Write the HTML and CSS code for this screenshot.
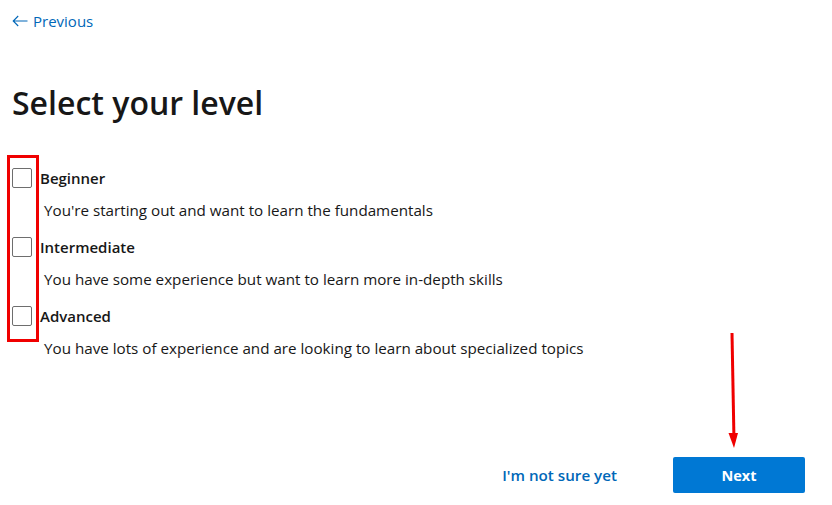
FILE: index.html
```html
<!DOCTYPE html>
<html lang="en">
<head>
<meta charset="utf-8">
<title>Select your level</title>
<link rel="stylesheet" href="styles.css">
</head>
<body>
<div class="page">
  <a class="back" href="#">
    <svg class="back-icon" width="16" height="12" viewBox="0 0 16 12" aria-hidden="true"><path d="M15.5 6H1.2M6.2 1L1.2 6l5 5" fill="none" stroke="currentColor" stroke-width="1.1"/></svg>
    <span>Previous</span>
  </a>
  <h1 class="title">Select your level</h1>
  <div class="options">
    <div class="option">
      <label class="option-row"><span class="box"></span><span class="option-label">Beginner</span></label>
      <p class="option-desc">You're starting out and want to learn the fundamentals</p>
    </div>
    <div class="option">
      <label class="option-row"><span class="box"></span><span class="option-label">Intermediate</span></label>
      <p class="option-desc">You have some experience but want to learn more in-depth skills</p>
    </div>
    <div class="option">
      <label class="option-row"><span class="box"></span><span class="option-label">Advanced</span></label>
      <p class="option-desc">You have lots of experience and are looking to learn about specialized topics</p>
    </div>
  </div>
  <div class="footer">
    <a class="link-btn" href="#">I'm not sure yet</a>
    <button class="primary-btn">Next</button>
  </div>
</div>
<div class="annot-box"></div>
<svg class="annot-arrow" width="20" height="125" viewBox="0 0 20 125" aria-hidden="true">
  <path d="M9 2 L11 110" stroke="#f00000" stroke-width="3" fill="none"/>
  <polygon points="5.5,102 15,102 11,117" fill="#f00000"/>
</svg>
</body>
</html>
```

FILE: styles.css
```css
html, body {
  margin: 0;
  padding: 0;
  background: #ffffff;
}
body {
  font-family: "Open Sans", "Noto Sans", sans-serif;
  color: #171717;
  position: relative;
  width: 832px;
  height: 505px;
  overflow: hidden;
}
.page {
  padding: 11px 27px 0 12px;
  display: flex;
  flex-direction: column;
}
.back {
  display: flex;
  align-items: center;
  gap: 5px;
  height: 20px;
  color: #0067b8;
  text-decoration: none;
  font-size: 15px;
  align-self: flex-start;
}
.back-icon {
  display: block;
}
.title {
  margin: 52px 0 0;
  font-size: 32px;
  line-height: 40px;
  font-weight: 600;
  color: #171717;
}
.options {
  margin-top: 45px;
  display: flex;
  flex-direction: column;
  gap: 16px;
}
.option-row {
  display: flex;
  align-items: center;
  height: 20px;
}
.box {
  width: 18px;
  height: 18px;
  border: 1px solid #6e6e6e;
  border-radius: 2px;
  box-sizing: content-box;
  flex: none;
}
.option-label {
  margin-left: 8px;
  font-size: 15px;
  font-weight: 600;
  color: #171717;
}
.option-desc {
  margin: 11px 0 0 32px;
  font-size: 15.2px;
  line-height: 22px;
  color: #171717;
}
.footer {
  margin-top: 97px;
  display: flex;
  justify-content: flex-end;
  align-items: center;
}
.link-btn {
  color: #0067b8;
  font-size: 15.2px;
  font-weight: 600;
  text-decoration: none;
  margin-right: 56px;
}
.primary-btn {
  width: 132px;
  height: 36px;
  margin-top: 1px;
  background: #0078d4;
  color: #ffffff;
  border: none;
  border-radius: 2px;
  font-family: inherit;
  font-size: 14.5px;
  font-weight: 700;
}
.annot-box {
  position: absolute;
  left: 7px;
  top: 155px;
  width: 26px;
  height: 181px;
  border: 3px solid #f00000;
}
.annot-arrow {
  position: absolute;
  left: 723px;
  top: 331px;
}
```
